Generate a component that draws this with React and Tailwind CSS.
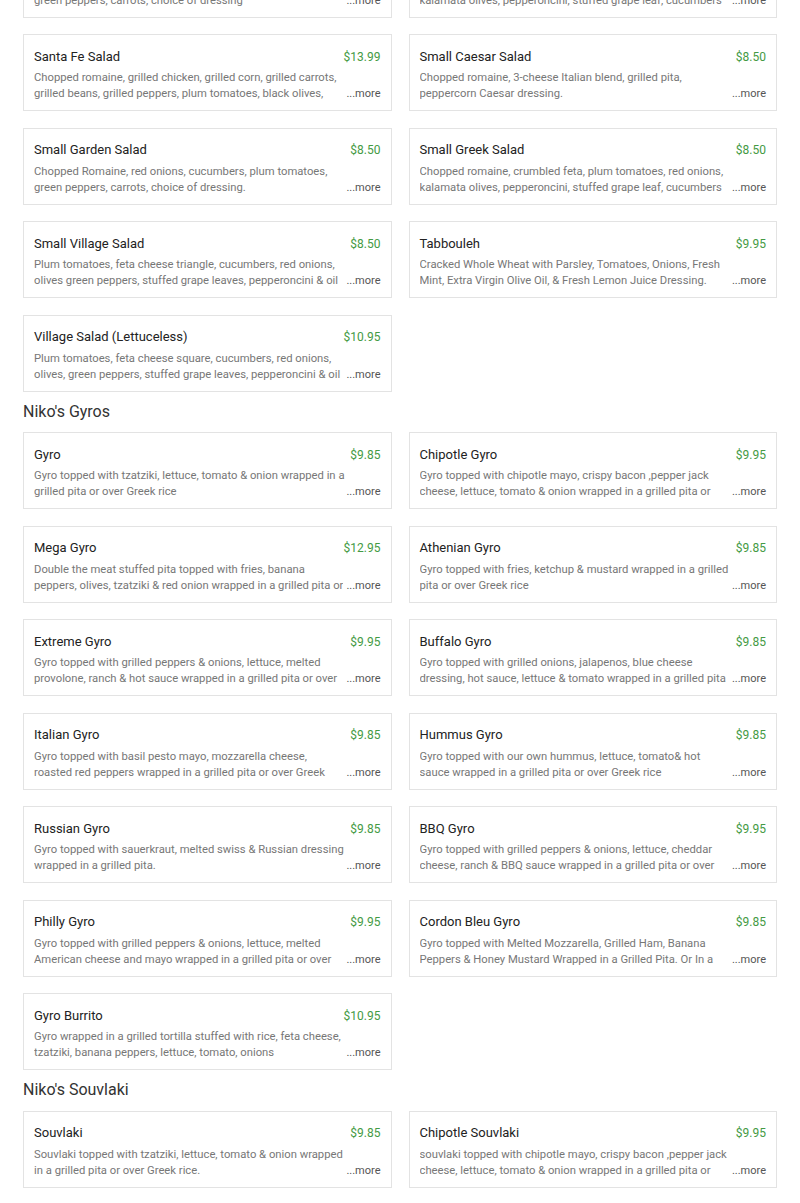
import React from 'react';

const topRow = [
  { name: 'Garden Salad', price: '$8.50', desc: 'Chopped Romaine, red onions, cucumbers, plum tomatoes, green peppers, carrots, choice of dressing' },
  { name: 'Greek Salad', price: '$8.50', desc: 'Chopped romaine, crumbled feta, plum tomatoes, red onions, kalamata olives, pepperoncini, stuffed grape leaf, cucumbers' },
];

const salads = [
  { name: 'Santa Fe Salad', price: '$13.99', desc: 'Chopped romaine, grilled chicken, grilled corn, grilled carrots, grilled beans, grilled peppers, plum tomatoes, black olives, cheddar cheese' },
  { name: 'Small Caesar Salad', price: '$8.50', desc: 'Chopped romaine, 3-cheese Italian blend, grilled pita, peppercorn Caesar dressing.' },
  { name: 'Small Garden Salad', price: '$8.50', desc: 'Chopped Romaine, red onions, cucumbers, plum tomatoes, green peppers, carrots, choice of dressing.' },
  { name: 'Small Greek Salad', price: '$8.50', desc: 'Chopped romaine, crumbled feta, plum tomatoes, red onions, kalamata olives, pepperoncini, stuffed grape leaf, cucumbers' },
  { name: 'Small Village Salad', price: '$8.50', desc: 'Plum tomatoes, feta cheese triangle, cucumbers, red onions, olives green peppers, stuffed grape leaves, pepperoncini & oil' },
  { name: 'Tabbouleh', price: '$9.95', desc: 'Cracked Whole Wheat with Parsley, Tomatoes, Onions, Fresh Mint, Extra Virgin Olive Oil, & Fresh Lemon Juice Dressing.' },
  { name: 'Village Salad (Lettuceless)', price: '$10.95', desc: 'Plum tomatoes, feta cheese square, cucumbers, red onions, olives, green peppers, stuffed grape leaves, pepperoncini & oil' },
];

const gyros = [
  { name: 'Gyro', price: '$9.85', desc: 'Gyro topped with tzatziki, lettuce, tomato & onion wrapped in a grilled pita or over Greek rice' },
  { name: 'Chipotle Gyro', price: '$9.95', desc: 'Gyro topped with chipotle mayo, crispy bacon ,pepper jack cheese, lettuce, tomato & onion wrapped in a grilled pita or over Greek rice' },
  { name: 'Mega Gyro', price: '$12.95', desc: 'Double the meat stuffed pita topped with fries, banana peppers, olives, tzatziki & red onion wrapped in a grilled pita or over Greek rice' },
  { name: 'Athenian Gyro', price: '$9.85', desc: 'Gyro topped with fries, ketchup & mustard wrapped in a grilled pita or over Greek rice' },
  { name: 'Extreme Gyro', price: '$9.95', desc: 'Gyro topped with grilled peppers & onions, lettuce, melted provolone, ranch & hot sauce wrapped in a grilled pita or over Greek rice' },
  { name: 'Buffalo Gyro', price: '$9.85', desc: 'Gyro topped with grilled onions, jalapenos, blue cheese dressing, hot sauce, lettuce & tomato wrapped in a grilled pita or over Greek rice' },
  { name: 'Italian Gyro', price: '$9.85', desc: 'Gyro topped with basil pesto mayo, mozzarella cheese, roasted red peppers wrapped in a grilled pita or over Greek rice' },
  { name: 'Hummus Gyro', price: '$9.85', desc: 'Gyro topped with our own hummus, lettuce, tomato& hot sauce wrapped in a grilled pita or over Greek rice' },
  { name: 'Russian Gyro', price: '$9.85', desc: 'Gyro topped with sauerkraut, melted swiss & Russian dressing wrapped in a grilled pita.' },
  { name: 'BBQ Gyro', price: '$9.95', desc: 'Gyro topped with grilled peppers & onions, lettuce, cheddar cheese, ranch & BBQ sauce wrapped in a grilled pita or over Greek rice' },
  { name: 'Philly Gyro', price: '$9.95', desc: 'Gyro topped with grilled peppers & onions, lettuce, melted American cheese and mayo wrapped in a grilled pita or over Greek rice' },
  { name: 'Cordon Bleu Gyro', price: '$9.85', desc: 'Gyro topped with Melted Mozzarella, Grilled Ham, Banana Peppers & Honey Mustard Wrapped in a Grilled Pita. Or In a Bowl over Greek rice' },
  { name: 'Gyro Burrito', price: '$10.95', desc: 'Gyro wrapped in a grilled tortilla stuffed with rice, feta cheese, tzatziki, banana peppers, lettuce, tomato, onions' },
];

const souvlaki = [
  { name: 'Souvlaki', price: '$9.85', desc: 'Souvlaki topped with tzatziki, lettuce, tomato & onion wrapped in a grilled pita or over Greek rice.' },
  { name: 'Chipotle Souvlaki', price: '$9.95', desc: 'souvlaki topped with chipotle mayo, crispy bacon ,pepper jack cheese, lettuce, tomato & onion wrapped in a grilled pita or over Greek rice' },
];

const Card = ({ item }) => (
  <div className='h-[77px] border border-[#e3e3e3] bg-white px-[10px] pt-[13.5px]'>
    <div className='flex justify-between items-center h-[16px]'>
      <span className='text-[13px] text-[#222]'>{item.name}</span>
      <span className='text-[12px] text-[#449a44]'>{item.price}</span>
    </div>
    <div className='relative mt-[5.5px]'>
      <p className='text-[11.25px] leading-[16px] h-[32px] overflow-hidden text-[#777] pr-[35px]'>{item.desc}</p>
      <span className='absolute right-0 bottom-0 bg-white pl-[3px] text-[11px] leading-[16px] text-[#555]'>...more</span>
    </div>
  </div>
);

const Grid = ({ items }) => (
  <div className='grid grid-cols-2 gap-x-[17px] gap-y-[16.5px]'>
    {items.map((it) => <Card key={it.name} item={it} />)}
  </div>
);

const Heading = ({ children }) => (
  <h2 className='mt-[10px] mb-[10.5px] text-[16px] leading-[20px] text-[#333]'>{children}</h2>
);

export default function App() {
  return (
    <div className='bg-white h-[1203px] overflow-hidden' style={{ fontFamily: 'Roboto, "Liberation Sans", sans-serif' }}>
      <div className='px-[23px] -mt-[59.5px]'>
        <Grid items={[...topRow, ...salads]} />
        <Heading>Niko's Gyros</Heading>
        <Grid items={gyros} />
        <Heading>Niko's Souvlaki</Heading>
        <Grid items={souvlaki} />
      </div>
    </div>
  );
}
